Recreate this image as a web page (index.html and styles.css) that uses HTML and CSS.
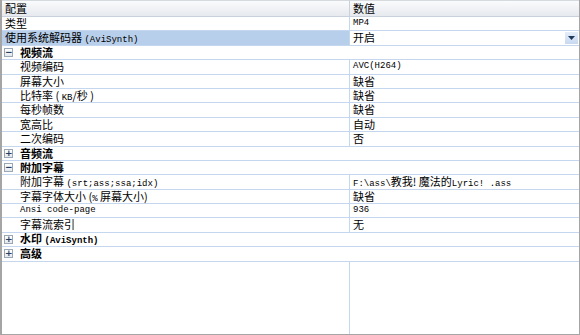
FILE: index.html
```html
<!DOCTYPE html>
<html>
<head>
<meta charset="utf-8">
<link rel="stylesheet" href="styles.css">
</head>
<body>
<div class="panel">
  <div class="grid">
    <div class="hcell">配置</div>
    <div class="hcell hval">数值</div>

    <div class="name top">类型</div>
    <div class="val lat">MP4</div>

    <div class="name top sel">使用系统解码器 <span class="lat">(AviSynth)</span></div>
    <div class="val combo"><span>开启</span><span class="drop"><svg width="7" height="4" viewBox="0 0 7 4"><path d="M0 0H7L3.5 4Z" fill="#1e395b"/></svg></span></div>

    <div class="cat"><span class="box">−</span><b>视频流</b></div>

    <div class="name">视频编码</div><div class="val lat">AVC(H264)</div>
    <div class="name">屏幕大小</div><div class="val">缺省</div>
    <div class="name">比特率 ( <span class="lat">KB</span>/秒 )</div><div class="val">缺省</div>
    <div class="name">每秒帧数</div><div class="val">缺省</div>
    <div class="name">宽高比</div><div class="val">自动</div>
    <div class="name">二次编码</div><div class="val">否</div>

    <div class="cat"><span class="box">+</span><b>音频流</b></div>
    <div class="cat"><span class="box">−</span><b>附加字幕</b></div>

    <div class="name">附加字幕 <span class="lat">(srt;ass;ssa;idx)</span></div><div class="val"><span class="lat">F:\ass\</span>教我! 魔法的<span class="lat">Lyric! .ass</span></div>
    <div class="name">字幕字体大小 (<span class="lat">%</span> 屏幕大小)</div><div class="val">缺省</div>
    <div class="name lat">Ansi code-page</div><div class="val lat">936</div>
    <div class="name">字幕流索引</div><div class="val">无</div>

    <div class="cat"><span class="box">+</span><b>水印 <span class="lat">(AviSynth)</span></b></div>
    <div class="cat"><span class="box">+</span><b>高级</b></div>

    <div class="fill"></div><div class="fill fval"></div>
  </div>
</div>
</body>
</html>
```
FILE: styles.css
```css
* { box-sizing: border-box; }
html, body { margin: 0; padding: 0; background: #fff; }
body {
  font-family: "Noto Sans CJK SC", "Liberation Sans", sans-serif;
  font-size: 11px;
  color: #000;
}
.panel {
  width: 580px;
  height: 335px;
  border: 1px solid #a5a5a5;
  border-top: none;
  border-left-width: 2px;
  display: flex;
  flex-direction: column;
}
.grid {
  flex: 1;
  display: grid;
  grid-template-columns: 347px 1fr;
  grid-template-rows: 17px repeat(17, 14.4px) 1fr;
}
.hcell {
  background: linear-gradient(#fafbfc, #e6e9ee);
  border-bottom: 1px solid #c9d2dc;
  border-top: 1px solid #d6d9de;
  padding-left: 3px;
  line-height: 15px;
  font-size: 11px;
}
.hval { border-left: 1px solid #c9d2dc; }
.name, .val, .cat {
  border-bottom: 1px solid #c5d7ef;
  line-height: 13px;
  white-space: nowrap;
}
.name { padding-left: 18px; }
.name.top { padding-left: 3px; }
.name.sel { background: #b8cfeb; }
.val {
  border-left: 1px solid #c5d7ef;
  padding-left: 3px;
}
.cat {
  grid-column: 1 / 3;
  display: flex;
  align-items: center;
  padding-left: 2px;
}
.cat b { font-weight: 700; margin-left: 7px; }
.box {
  width: 9px;
  height: 9px;
  border: 1px solid #9aa7b4;
  background: linear-gradient(#ffffff, #e3e8ef);
  font-size: 9px;
  line-height: 7px;
  text-align: center;
  color: #2a3f5a;
  font-family: "DejaVu Sans", sans-serif;
  font-weight: 700;
}
.lat { font-family: "Liberation Mono", monospace; font-size: 9px; }
.combo {
  display: flex;
  justify-content: space-between;
  align-items: stretch;
}
.drop {
  width: 13px;
  margin: 1px 1px 1px 0;
  background: linear-gradient(#e6eefa, #c7d8f0);
  display: flex;
  align-items: center;
  justify-content: center;
}
.fval { border-left: 1px solid #c5d7ef; }
```
